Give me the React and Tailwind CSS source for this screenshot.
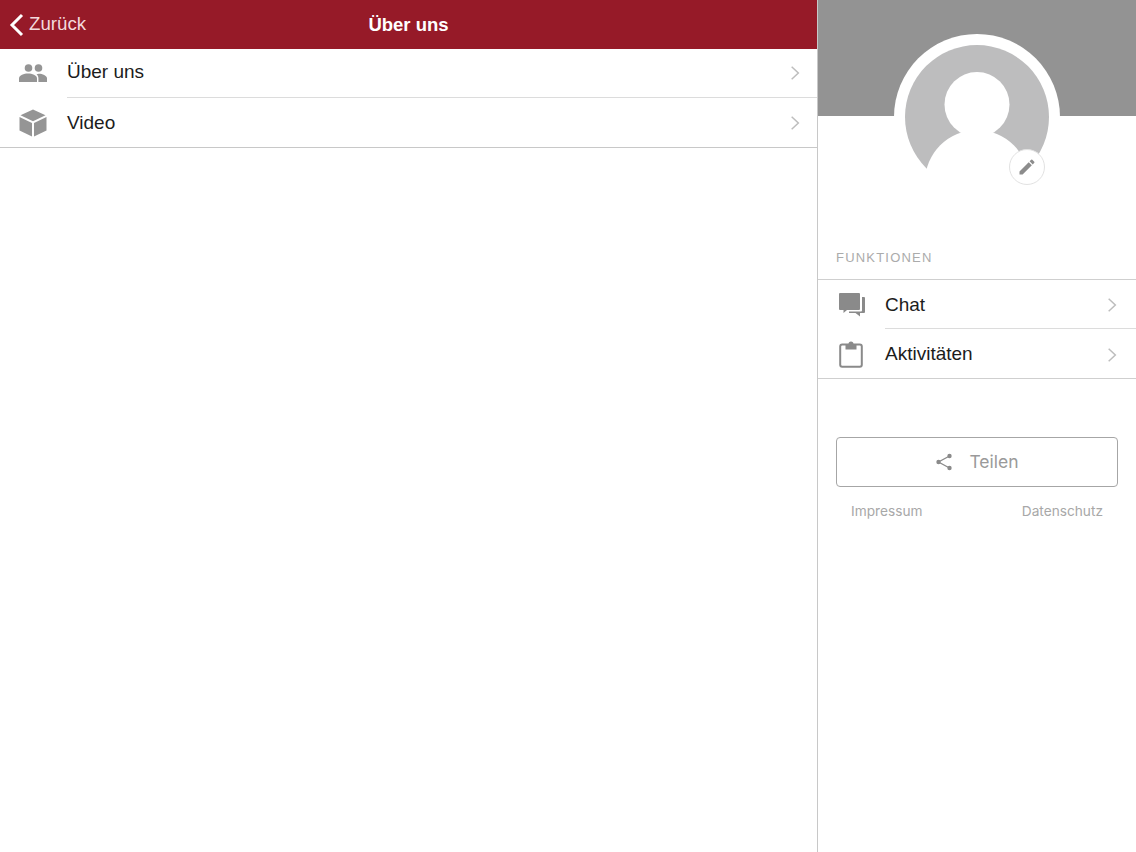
import React from 'react';

const sans = "font-['Liberation_Sans',Arial,sans-serif]";

const Chevron = ({ className }) => (
  <svg viewBox="0 0 12 18" className={className} fill="none" stroke="#bdbdbd" strokeWidth="1.8">
    <path d="M2 1.5 L10 9 L2 16.5" />
  </svg>
);

const PeopleIcon = () => (
  <svg viewBox="0 0 28 18" className="w-[28px] h-[18px]" fill="#959595">
    <circle cx="9.5" cy="4" r="3.8" />
    <circle cx="19.5" cy="4" r="3.8" />
    <path d="M0 18v-3.6C0 11.5 5 9.6 9 9.6s9 1.9 9 4.8V18z" />
    <path d="M19.4 18v-3.8c0-1.6-.7-2.9-1.9-3.9.8-.3 1.6-.6 2.4-.6 3.4 0 8.1 1.8 8.1 4.6V18z" />
  </svg>
);

const BoxIcon = () => (
  <svg viewBox="0 0 28 28" className="w-[28px] h-[28px]" fill="#959595">
    <path d="M14 0.5 L26.5 6.3 L14 12.3 L1.5 6.3 Z" />
    <path d="M0.5 8 L13 14 V27.5 L0.5 21.5 Z" />
    <path d="M27.5 8 L15 14 V27.5 L27.5 21.5 Z" />
  </svg>
);

const ChatIcon = () => (
  <svg viewBox="0 0 26 24" className="w-[26px] h-[24px] ml-px" fill="#8a8a8a">
    <path d="M1 0h19a1 1 0 0 1 1 1v15a1 1 0 0 1-1 1H8l-3.5 3v-3H1a1 1 0 0 1-1-1V1a1 1 0 0 1 1-1z" />
    <path d="M23 4h2a1 1 0 0 1 1 1v14a1 1 0 0 1-1 1h-4v3.500l-4.500-3.500H10v-1.500h12a1 1 0 0 0 1-1z" />
  </svg>
);

const ClipboardIcon = () => (
  <svg viewBox="0 0 24 27" className="w-[24px] h-[27px]" fill="none">
    <rect x="1.200" y="3.500" width="21.600" height="22.300" rx="2" stroke="#8a8a8a" strokeWidth="2" />
    <path d="M6.500 3h3a2.500 2.500 0 0 1 5 0h3v5.500h-11z" fill="#8a8a8a" />
  </svg>
);

const ShareIcon = () => (
  <svg viewBox="0 0 18 18" className="w-[18px] h-[18px]" fill="#8a8a8a" stroke="#8a8a8a">
    <path d="M14.500 3 L3.500 9 L14.500 15" fill="none" strokeWidth="1.300" />
    <circle cx="14.500" cy="3" r="2.200" stroke="none" />
    <circle cx="3.500" cy="9" r="2.200" stroke="none" />
    <circle cx="14.500" cy="15" r="2.200" stroke="none" />
  </svg>
);

const Avatar = () => (
  <svg viewBox="0 0 166 166" className="w-[166px] h-[166px]">
    <circle cx="83" cy="83" r="83" fill="#fff" />
    <circle cx="83" cy="83" r="72" fill="#bdbdbe" />
    <circle cx="83" cy="70.500" r="32.500" fill="#fff" />
    <circle cx="83" cy="148" r="52" fill="#fff" />
  </svg>
);

const Row = ({ icon, label, divider, chevronRight, nudge }) => (
  <div className={`flex items-center h-[49px] relative ${nudge}`}>
    <div className="flex items-center justify-center shrink-0 w-[67px] pr-px">{icon}</div>
    <span className={`text-[19px] text-[#1c1c1c] ${sans}`}>{label}</span>
    <Chevron className={`w-[10px] h-[16px] ml-auto ${chevronRight}`} />
    {divider && <div className="absolute bottom-0 left-[67px] right-0 h-px bg-[#dcdcdc]" />}
  </div>
);

export default function App() {
  return (
    <div className={`flex w-[1136px] h-[852px] bg-white overflow-hidden ${sans}`}>
      <div className="w-[818px] shrink-0 border-r border-[#c8c8c8]">
        <header className="relative flex items-center justify-center h-[49px] bg-[#961a28] text-white">
          <div className="absolute left-[9px] top-0 h-full flex items-center gap-[5px]">
            <svg viewBox="0 0 15 24" className="w-[15px] h-[24px]" fill="none" stroke="#fff" strokeWidth="3">
              <path d="M13 2 L3 12 L13 22" />
            </svg>
            <span className="text-[18.700px] text-[#f3d9dc]">Zurück</span>
          </div>
          <h1 className="text-[18.500px] font-bold">Über uns</h1>
        </header>
        <div className="border-b border-[#c8c8c8]">
          <Row icon={<PeopleIcon />} label="Über uns" divider chevronRight="mr-[17px]" nudge="pb-[2px]" />
          <Row icon={<BoxIcon />} label="Video" chevronRight="mr-[17px]" nudge="pt-px" />
        </div>
      </div>

      <aside className="flex-1 min-w-0">
        <div className="relative h-[116px] bg-[#939393] flex justify-center">
          <div className="absolute top-[34px] left-1/2 -translate-x-1/2">
            <Avatar />
            <div className="absolute left-[115px] top-[115px] w-[36px] h-[36px] rounded-full bg-white border border-[#e2e2e2] flex items-center justify-center">
              <svg viewBox="0 0 24 24" className="w-[20px] h-[20px]" fill="#8c8c8c">
                <path d="M3 17.250V21h3.750L17.810 9.940l-3.750-3.750L3 17.250zM20.710 7.040a1 1 0 0 0 0-1.410l-2.340-2.340a1 1 0 0 0-1.410 0l-1.830 1.830 3.750 3.750 1.830-1.830z" />
              </svg>
            </div>
          </div>
        </div>

        <div className="pt-[134px] pl-[18px] pb-[13px] text-[13px] tracking-[1.200px] leading-[16px] text-[#ababab]">FUNKTIONEN</div>
        <div className="border-y border-[#cfcfcf]">
          <Row icon={<ChatIcon />} label="Chat" divider chevronRight="mr-[19px]" nudge="pt-px" />
          <Row icon={<ClipboardIcon />} label="Aktivitäten" chevronRight="mr-[19px]" nudge="pt-[2px]" />
        </div>

        <div className="px-[18px] pt-[58px]">
          <button className="w-full h-[50px] flex items-center justify-center gap-[16px] border border-[#a6a6a6] rounded-[4px] bg-white">
            <ShareIcon />
            <span className="text-[17.500px] text-[#9a9a9a] font-['Inter',sans-serif]">Teilen</span>
          </button>
          <div className="flex justify-between px-[15px] pt-[15px] text-[13.700px] leading-[18px] text-[#a8a8a8] font-['Inter',sans-serif]">
            <span>Impressum</span>
            <span>Datenschutz</span>
          </div>
        </div>
      </aside>
    </div>
  );
}
